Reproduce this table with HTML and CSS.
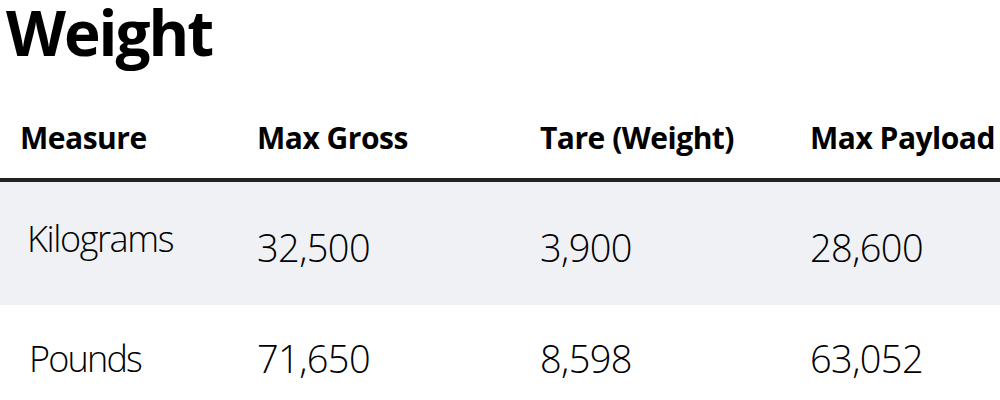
FILE: index.html
```html
<!DOCTYPE html>
<html lang="en">
<head>
<meta charset="utf-8">
<title>Weight</title>
<link rel="stylesheet" href="styles.css">
</head>
<body>
<section class="spec">
  <h1 class="spec-title">Weight</h1>
  <table class="spec-table">
    <colgroup>
      <col class="c1"><col class="c2"><col class="c3"><col class="c4">
    </colgroup>
    <thead>
      <tr>
        <th class="first">Measure</th>
        <th>Max Gross</th>
        <th>Tare (Weight)</th>
        <th>Max Payload</th>
      </tr>
    </thead>
    <tbody>
      <tr class="alt">
        <td class="first kg">Kilograms</td>
        <td>32,500</td>
        <td>3,900</td>
        <td>28,600</td>
      </tr>
      <tr class="second">
        <td class="first lb">Pounds</td>
        <td>71,650</td>
        <td>8,598</td>
        <td>63,052</td>
      </tr>
    </tbody>
  </table>
</section>
</body>
</html>
```

FILE: styles.css
```css
html, body {
  margin: 0;
  padding: 0;
  background: #fff;
}
body {
  font-family: "Open Sans", "Noto Sans", "Liberation Sans", sans-serif;
  color: #000;
}
.spec-title {
  margin: 0;
  padding-left: 6px;
  font-size: 62px;
  line-height: 64px;
  font-weight: 700;
  letter-spacing: -2px;
}
.spec-table {
  width: 100%;
  border-collapse: collapse;
  table-layout: fixed;
  margin-top: 54px;
}
.c1 { width: 250px; }
.c2 { width: 283px; }
.c3 { width: 270px; }
.c4 { width: 197px; }
.spec-table th {
  text-align: left;
  font-weight: 700;
  font-size: 30px;
  line-height: 40px;
  padding: 0 0 20px 7px;
  letter-spacing: -0.5px;
  white-space: nowrap;
  border-bottom: 4px solid #222;
}
.spec-table th.first { padding-left: 20px; }
.spec-table td {
  font-weight: 300;
  font-size: 38px;
  line-height: 50px;
  height: 123px;
  box-sizing: border-box;
  padding: 40px 0 33px 7px;
  vertical-align: top;
  white-space: nowrap;
  letter-spacing: -0.6px;
}
.spec-table td.first {
  padding-left: 27px;
  font-size: 36px;
  letter-spacing: -1.4px;
}
.spec-table td.kg { padding-top: 32px; }
.spec-table tr.second td { padding-top: 28px; }
.spec-table tr.second td.lb { padding-left: 29px; padding-top: 29px; letter-spacing: -1.8px; }
.spec-table tr.alt td { background: #f0f1f5; }
```
